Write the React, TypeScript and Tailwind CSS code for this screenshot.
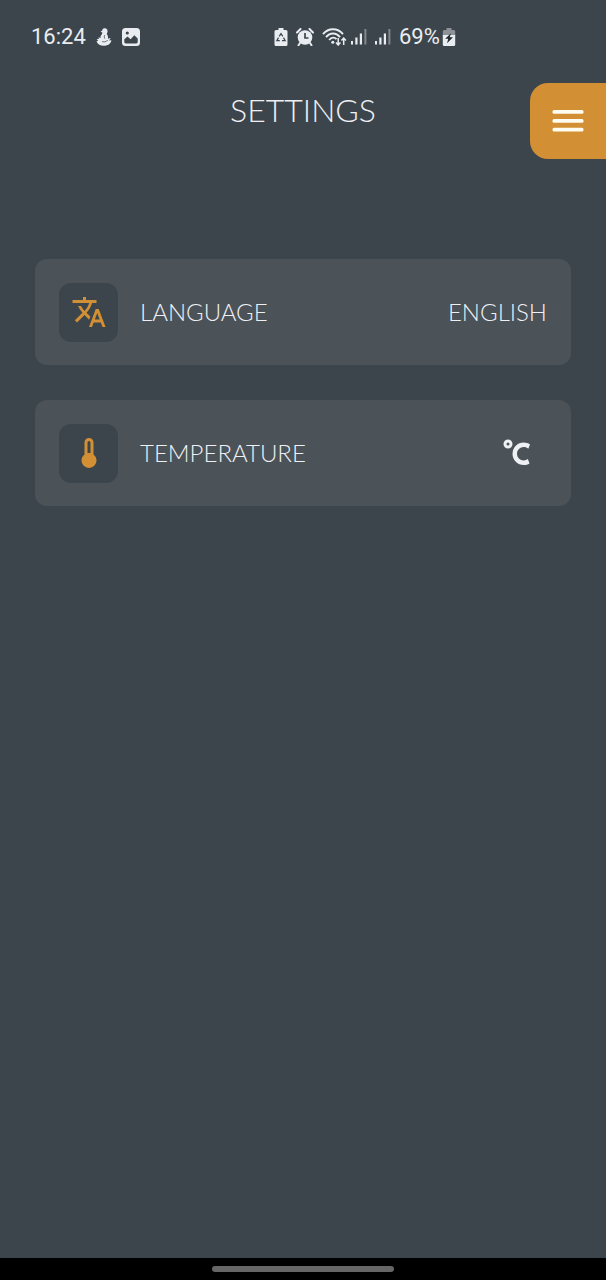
import type { ReactNode } from "react";

function Signal() {
  return (
    <svg width="16" height="18" viewBox="0 0 16 18" fill="#e9edf1" aria-hidden="true">
      <rect x="0" y="13" width="2" height="3.5" />
      <rect x="4.3" y="9.5" width="2.2" height="7" />
      <rect x="8.8" y="5.5" width="2.2" height="11" />
      <rect x="13.4" y="1" width="2" height="15.5" opacity="0.4" />
    </svg>
  );
}

function StatusBar() {
  return (
    <div className="flex h-[73px] items-center pl-[31px] font-[Roboto,sans-serif] text-[22px] leading-none font-normal text-[#e9edf1]">
      <span className="w-[65px]">16:24</span>
      <svg className="mr-2.5" width="16" height="18" viewBox="0 0 16 18" fill="#e9edf1" aria-hidden="true">
        <path d="M9 0.3C7.2 0.1 6.1 1.1 6.2 2.7L4.4 3.4L6.3 4.6C6.4 5.4 6.2 6 5.6 6.7C4.6 7.6 4.3 8.6 4.8 9.8L2.3 9.4L3.2 10.8L0.6 11.3L2.2 12.4L0.5 13.4C1.5 16 4.4 17.7 7.8 17.7C12 17.7 15 15.5 15.4 12.2L13 12.6L14.8 9.9L12 10.7C12.2 9 12 7.3 10.7 5.9C12.1 4 12 0.8 9 0.3Z" />
        <path d="M8.8 7Q7.6 8.8 8.8 10.7M6 13.7Q9 14.8 11.8 12.3" fill="none" stroke="#3d454c" strokeWidth="0.7" />
      </svg>
      <svg width="18" height="18" viewBox="0 0 18 18" aria-hidden="true">
        <rect width="18" height="18" rx="3.5" fill="#e9edf1" />
        <path d="M2.3 14V11.3L5.5 8.5L8.6 11.3L12.3 7.2L15.7 10.5V14Q15.7 15.4 14.3 15.4H3.7Q2.3 15.4 2.3 14Z" fill="#3d454c" />
        <circle cx="5.3" cy="5" r="1.6" fill="#3d454c" />
      </svg>
      <div className="ml-[134px] flex items-center gap-2">
        <svg width="14" height="18" viewBox="0 0 14 18" aria-hidden="true">
          <path d="M4.5 0H9.5V2H12Q13.5 2 13.5 3.5V16.5Q13.5 18 12 18H2Q0.5 18 0.5 16.5V3.5Q0.5 2 2 2H4.5Z" fill="#e9edf1" />
          <path d="M5.2 8.4L7 5.6L8.8 8.4M9.5 9.6L11.2 12.7H8M5.8 12.7H2.8L4.5 9.6" fill="none" stroke="#3d454c" strokeWidth="1.2" />
        </svg>
        <svg width="18" height="18" viewBox="0 0 18 18" aria-hidden="true">
          <circle cx="9" cy="9.5" r="7.3" fill="#e9edf1" />
          <path d="M1 4.5L4.5 1M17 4.5L13.5 1M4 15L2.5 17.2M14 15L15.5 17.2" stroke="#e9edf1" strokeWidth="2" strokeLinecap="round" />
          <path d="M9 5V10H12.5" fill="none" stroke="#3d454c" strokeWidth="1.7" />
        </svg>
        <div className="flex items-center gap-1">
          <svg width="25" height="18" viewBox="0 0 25 18" fill="none" stroke="#e9edf1" strokeWidth="1.9" aria-hidden="true">
            <path d="M1 6.2C6.3 -0.5 15.7 -0.5 21 6.2M4 9.2C8 4.2 14 4.2 18 9.2M7.2 12C9.5 9 12.5 9 14.5 11.2" />
            <circle cx="10.8" cy="14.2" r="1.5" fill="#e9edf1" stroke="none" />
            <path d="M16.2 10V16.7M14 14.6L16.2 17L18.4 14.6M21.7 17V10.3M19.5 12.5L21.7 10.1L23.9 12.5" strokeWidth="1.5" />
          </svg>
          <Signal />
        </div>
        <Signal />
        <div className="flex items-center gap-0.5">
          <span>69%</span>
          <svg width="14" height="18" viewBox="0 0 14 18" aria-hidden="true">
            <path d="M4.5 0H9.5V2H12Q13.2 2 13.2 3.5V8H0.8V3.5Q0.8 2 2 2H4.5Z" fill="#8b9196" />
            <path d="M0.8 7H13.2V16.5Q13.2 18 11.8 18H2.2Q0.8 18 0.8 16.5Z" fill="#e9edf1" />
            <path d="M9 5.2L3.2 10.8H6.3L5 15.2L11 9.3H7.7Z" fill="#20262b" />
          </svg>
        </div>
      </div>
    </div>
  );
}

function SettingRow({ icon, label, children }: { icon: ReactNode; label: string; children: ReactNode }) {
  return (
    <li className="flex h-[106px] items-center gap-[22px] rounded-xl bg-[#4b5258] px-6">
      <span className="flex size-[59px] items-center justify-center rounded-xl bg-[#3d454c] text-[#d38f33]">{icon}</span>
      <span className="flex-1">{label}</span>
      {children}
    </li>
  );
}

function Glyph({ d }: { d: string }) {
  return (
    <svg width="36" height="36" viewBox="0 0 24 24" fill="currentColor" aria-hidden="true">
      <path d={d} />
    </svg>
  );
}

const translate =
  "M12.87 15.07L10.33 12.56L10.36 12.53C12.1 10.59 13.34 8.36 14.07 6H17V4H10V2H8V4H1V6H12.17C11.5 7.92 10.44 9.75 9 11.35C8.07 10.32 7.3 9.19 6.69 8H4.69C5.42 9.63 6.42 11.17 7.67 12.56L2.58 17.58L4 19L9 14L12.11 17.11L12.87 15.07M18.5 10H16.5L12 22H14L15.12 19H19.87L21 22H23L18.5 10M15.88 17L17.5 12.67L19.12 17H15.88Z";
const thermometer = "M15 13V5A3 3 0 0 0 9 5V13A5 5 0 1 0 15 13M12 4A1 1 0 0 1 13 5V12H11V5A1 1 0 0 1 12 4Z";
const celsius =
  "M16.5 5C18.05 5 19.5 5.47 20.69 6.28L19.53 9.17C18.73 8.44 17.67 8 16.5 8C14 8 12 10 12 12.5C12 15 14 17 16.5 17C17.53 17 18.47 16.66 19.23 16.08L20.37 18.93C19.24 19.61 17.92 20 16.5 20A7.5 7.5 0 0 1 9 12.5A7.5 7.5 0 0 1 16.5 5M6 3A3 3 0 0 1 9 6A3 3 0 0 1 6 9A3 3 0 0 1 3 6A3 3 0 0 1 6 3M6 5A1 1 0 0 0 5 6A1 1 0 0 0 6 7A1 1 0 0 0 7 6A1 1 0 0 0 6 5Z";

export default function App() {
  return (
    <div className="flex min-h-screen flex-col bg-[#3d454c] font-[Lato,sans-serif] font-light text-[#eef0f4]">
      <StatusBar />
      <header className="mt-2.5 grid grid-cols-[1fr_auto_1fr] items-start">
        <h1 className="col-start-2 text-[32px] leading-[54px]">SETTINGS</h1>
        <button
          type="button"
          aria-label="Menu"
          className="flex size-[76px] items-center justify-center justify-self-end rounded-l-[18px] bg-[#d38f33]"
        >
          <svg width="32" height="22" viewBox="0 0 32 22" fill="#fffdf2" aria-hidden="true">
            <rect x="0.5" y="0" width="31" height="3.8" rx="1.5" />
            <rect x="0.5" y="8.9" width="31" height="3.8" rx="1.5" />
            <rect x="0.5" y="17.7" width="31" height="3.8" rx="1.5" />
          </svg>
        </button>
      </header>
      <main className="flex-1 px-[35px] pt-[100px]">
        <ul className="flex flex-col gap-[35px] text-2xl">
          <SettingRow icon={<Glyph d={translate} />} label="LANGUAGE">
            <button type="button">ENGLISH</button>
          </SettingRow>
          <SettingRow icon={<Glyph d={thermometer} />} label="TEMPERATURE">
            <button type="button" aria-label="Celsius" className="px-3">
              <Glyph d={celsius} />
            </button>
          </SettingRow>
        </ul>
      </main>
      <footer className="flex h-[22px] items-center justify-center bg-black">
        <div className="h-1.5 w-[182px] rounded-full bg-[#666666]" />
      </footer>
    </div>
  );
}
